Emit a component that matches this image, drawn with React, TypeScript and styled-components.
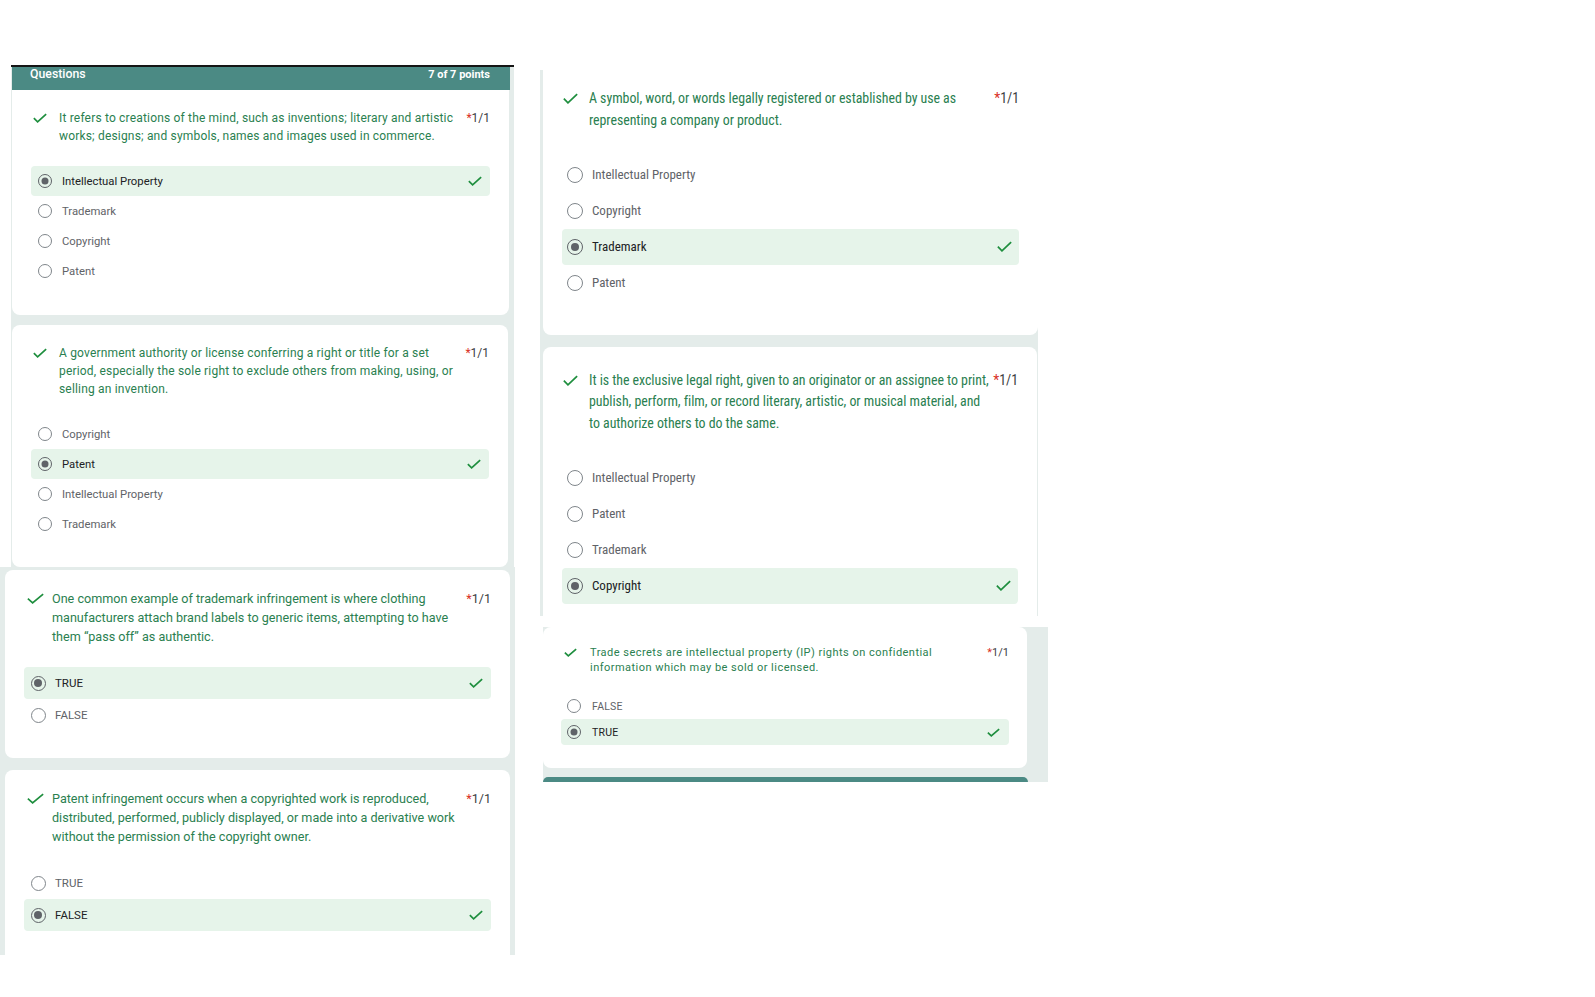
import React from "react";
import styled, { createGlobalStyle } from "styled-components";

const GlobalStyle = createGlobalStyle`
  html, body { margin: 0; padding: 0; background: #ffffff; }
  body { font-family: Roboto, "Noto Sans", Arial, sans-serif; }
  #root { min-height: 997px; }
`;

const ROBOTO = `Roboto, "Noto Sans", Arial, sans-serif`;

const C = {
  teal: "#4b8a84",
  bg: "#e4ecea",
  hl: "#e6f4ea",
  green: "#1e8e3e",
  qText: "#2a8050",
  red: "#d93025",
  dark: "#3c4043",
  label: "#5f6368",
  selLabel: "#202124",
  radio: "#80868b",
};

type Scale = {
  padX: number;
  qIndent: number;
  checkBox: number;
  checkW: number;
  checkH: number;
  qSize: number;
  qLh: number;
  qSpacing: number;
  stretch: string;
  gap: number;
  rowH: number;
  radio: number;
  radioLeft: number;
  labelLeft: number;
  optSize: number;
  optSpacing: number;
  tickW: number;
  tickH: number;
  tickRight: number;
};

const L1: Scale = {
  padX: 19, qIndent: 2, checkBox: 26, checkW: 14, checkH: 10,
  qSize: 12, qLh: 18, qSpacing: 0.18, stretch: "100%",
  gap: 21, rowH: 30, radio: 14, radioLeft: 7, labelLeft: 31, optSize: 11.3, optSpacing: 0,
  tickW: 14, tickH: 10, tickRight: 8,
};
const L3: Scale = {
  padX: 19, qIndent: 3, checkBox: 25, checkW: 17, checkH: 11,
  qSize: 12.6, qLh: 19, qSpacing: 0, stretch: "100%",
  gap: 21.5, rowH: 32, radio: 15, radioLeft: 6.5, labelLeft: 31, optSize: 11.5, optSpacing: 0,
  tickW: 14, tickH: 10, tickRight: 8,
};
const R: Scale = {
  padX: 19, qIndent: 1, checkBox: 26, checkW: 15, checkH: 11,
  qSize: 13.9, qLh: 21.5, qSpacing: -0.04, stretch: "75%",
  gap: 25.5, rowH: 36, radio: 16, radioLeft: 5, labelLeft: 30, optSize: 13, optSpacing: 0,
  tickW: 15, tickH: 11, tickRight: 7,
};
const R3: Scale = {
  padX: 18, qIndent: 3, checkBox: 26, checkW: 13, checkH: 9,
  qSize: 11, qLh: 15.5, qSpacing: 0.47, stretch: "100%",
  gap: 17.5, rowH: 26, radio: 14, radioLeft: 6, labelLeft: 31, optSize: 10.5, optSpacing: 0.2,
  tickW: 13, tickH: 9, tickRight: 9,
};

/* ---------- layout ---------- */

const Page = styled.div`
  display: flex;
  align-items: flex-start;
  padding-top: 65px;
`;

const LeftColumn = styled.div`
  display: flex;
  flex-direction: column;
  width: 515px;
  flex: none;
`;

const RightColumn = styled.div`
  display: flex;
  flex-direction: column;
  width: 508px;
  margin-left: 25px;
  padding-top: 5px;
  flex: none;
`;

const SheetTop = styled.div`
  display: flex;
  flex-direction: column;
  width: 503px;
  margin-left: 11px;
  box-sizing: border-box;
  border-top: 2px solid #151515;
  background: ${C.bg};
  padding: 0 4px 0 1px;
`;

const Sheet = styled.div<{ $h: number; $pad: string; $gap: number; $ml?: number; $mt?: number; $w: number }>`
  display: flex;
  flex-direction: column;
  gap: ${(p) => p.$gap}px;
  width: ${(p) => p.$w}px;
  height: ${(p) => p.$h}px;
  margin-left: ${(p) => p.$ml ?? 0}px;
  margin-top: ${(p) => p.$mt ?? 0}px;
  box-sizing: border-box;
  padding: ${(p) => p.$pad};
  background: ${C.bg};
  overflow: hidden;
  flex: none;
`;

const Header = styled.div`
  display: flex;
  justify-content: space-between;
  align-items: flex-start;
  height: 23px;
  box-sizing: border-box;
  padding: 1px 20px 0 18px;
  background: ${C.teal};
  color: #ffffff;
  font-family: ${ROBOTO};
  line-height: 13px;
`;

const HeaderTitle = styled.span`
  font-size: 12.3px;
  font-weight: 500;
`;

const HeaderScore = styled.span`
  font-size: 11px;
  font-weight: 700;
`;

const TealBar = styled.div`
  height: 5px;
  width: 485px;
  background: ${C.teal};
  border-radius: 8px 8px 0 0;
  flex: none;
`;

/* ---------- card ---------- */

const Card = styled.div<{ $s: Scale; $pt: number; $pb: number; $radius: string; $mr?: number; $mt?: number }>`
  flex: none;
  background: #ffffff;
  border-radius: ${(p) => p.$radius};
  padding: ${(p) => `${p.$pt}px ${p.$s.padX}px ${p.$pb}px`};
  margin-right: ${(p) => p.$mr ?? 0}px;
  margin-top: ${(p) => p.$mt ?? 0}px;
`;

const QuestionRow = styled.div<{ $s: Scale }>`
  display: flex;
  align-items: flex-start;
  margin-left: ${(p) => p.$s.qIndent}px;
  font-family: ${ROBOTO};
  font-size: ${(p) => p.$s.qSize}px;
  line-height: ${(p) => p.$s.qLh}px;
  font-stretch: ${(p) => p.$s.stretch};
`;

const CheckSlot = styled.div<{ $s: Scale }>`
  flex: none;
  width: ${(p) => p.$s.checkBox}px;
  height: ${(p) => p.$s.qLh}px;
  display: flex;
  align-items: center;
`;

const QText = styled.div<{ $s: Scale }>`
  color: ${C.qText};
  letter-spacing: ${(p) => p.$s.qSpacing}px;
`;

const QLine = styled.span`
  display: block;
  white-space: nowrap;
`;

const Points = styled.div`
  margin-left: auto;
  padding-left: 4px;
  flex: none;
  color: ${C.dark};
  white-space: nowrap;
`;

const Star = styled.span`
  color: ${C.red};
`;

const Options = styled.div<{ $s: Scale }>`
  display: flex;
  flex-direction: column;
  margin-top: ${(p) => p.$s.gap}px;
`;

const OptionRow = styled.div<{ $s: Scale; $selected: boolean }>`
  display: flex;
  align-items: center;
  height: ${(p) => p.$s.rowH}px;
  padding-left: ${(p) => p.$s.radioLeft}px;
  border-radius: 4px;
  background: ${(p) => (p.$selected ? C.hl : "transparent")};
  font-family: ${ROBOTO};
  font-stretch: ${(p) => p.$s.stretch};
  font-size: ${(p) => p.$s.optSize}px;
  letter-spacing: ${(p) => p.$s.optSpacing}px;
`;

const Radio = styled.span<{ $s: Scale; $selected: boolean }>`
  flex: none;
  position: relative;
  box-sizing: border-box;
  width: ${(p) => p.$s.radio}px;
  height: ${(p) => p.$s.radio}px;
  border-radius: 50%;
  border: 1.5px solid ${(p) => (p.$selected ? "#5f6368" : C.radio)};
  &::after {
    content: "";
    display: ${(p) => (p.$selected ? "block" : "none")};
    position: absolute;
    left: 50%;
    top: 50%;
    width: ${(p) => Math.round(p.$s.radio * 0.5)}px;
    height: ${(p) => Math.round(p.$s.radio * 0.5)}px;
    transform: translate(-50%, -50%);
    border-radius: 50%;
    background: #5f6368;
  }
`;

const Label = styled.span<{ $s: Scale; $selected: boolean }>`
  margin-left: ${(p) => p.$s.labelLeft - p.$s.radioLeft - p.$s.radio}px;
  color: ${(p) => (p.$selected ? C.selLabel : C.label)};
  white-space: nowrap;
`;

const Tick = styled.span<{ $s: Scale }>`
  margin-left: auto;
  margin-right: ${(p) => p.$s.tickRight}px;
  display: flex;
`;

function CheckIcon({ w, h }: { w: number; h: number }) {
  const sw = 1.7;
  return (
    <svg width={w} height={h} viewBox={`0 0 ${w} ${h}`} fill="none">
      <polyline
        points={`${sw / 2},${h * 0.52} ${w * 0.33},${h - sw / 2 - 0.3} ${w - sw / 2},${sw / 2 + 0.3}`}
        stroke={C.green}
        strokeWidth={sw}
        strokeLinejoin="miter"
      />
    </svg>
  );
}

type Q = {
  lines: string[];
  options: string[];
  answer: number;
};

function QuestionCard({
  s, q, pt, pb, radius, mr, mt,
}: { s: Scale; q: Q; pt: number; pb: number; radius: string; mr?: number; mt?: number }) {
  return (
    <Card $s={s} $pt={pt} $pb={pb} $radius={radius} $mr={mr} $mt={mt}>
      <QuestionRow $s={s}>
        <CheckSlot $s={s}>
          <CheckIcon w={s.checkW} h={s.checkH} />
        </CheckSlot>
        <QText $s={s}>
          {q.lines.map((l) => (
            <QLine key={l}>{l}</QLine>
          ))}
        </QText>
        <Points>
          <Star>*</Star>1/1
        </Points>
      </QuestionRow>
      <Options $s={s}>
        {q.options.map((o, i) => (
          <OptionRow key={o} $s={s} $selected={i === q.answer}>
            <Radio $s={s} $selected={i === q.answer} />
            <Label $s={s} $selected={i === q.answer}>{o}</Label>
            {i === q.answer && (
              <Tick $s={s}>
                <CheckIcon w={s.tickW} h={s.tickH} />
              </Tick>
            )}
          </OptionRow>
        ))}
      </Options>
    </Card>
  );
}

const Q1: Q = {
  lines: [
    "It refers to creations of the mind, such as inventions; literary and artistic",
    "works; designs; and symbols, names and images used in commerce.",
  ],
  options: ["Intellectual Property", "Trademark", "Copyright", "Patent"],
  answer: 0,
};
const Q2: Q = {
  lines: [
    "A government authority or license conferring a right or title for a set",
    "period, especially the sole right to exclude others from making, using, or",
    "selling an invention.",
  ],
  options: ["Copyright", "Patent", "Intellectual Property", "Trademark"],
  answer: 1,
};
const Q3: Q = {
  lines: [
    "One common example of trademark infringement is where clothing",
    "manufacturers attach brand labels to generic items, attempting to have",
    "them “pass off” as authentic.",
  ],
  options: ["TRUE", "FALSE"],
  answer: 0,
};
const Q4: Q = {
  lines: [
    "Patent infringement occurs when a copyrighted work is reproduced,",
    "distributed, performed, publicly displayed, or made into a derivative work",
    "without the permission of the copyright owner.",
  ],
  options: ["TRUE", "FALSE"],
  answer: 1,
};
const Q5: Q = {
  lines: [
    "A symbol, word, or words legally registered or established by use as",
    "representing a company or product.",
  ],
  options: ["Intellectual Property", "Copyright", "Trademark", "Patent"],
  answer: 2,
};
const Q6: Q = {
  lines: [
    "It is the exclusive legal right, given to an originator or an assignee to print,",
    "publish, perform, film, or record literary, artistic, or musical material, and",
    "to authorize others to do the same.",
  ],
  options: ["Intellectual Property", "Patent", "Trademark", "Copyright"],
  answer: 3,
};
const Q7: Q = {
  lines: [
    "Trade secrets are intellectual property (IP) rights on confidential",
    "information which may be sold or licensed.",
  ],
  options: ["FALSE", "TRUE"],
  answer: 1,
};

export default function App() {
  return (
    <>
      <GlobalStyle />
      <Page>
        <LeftColumn>
          <SheetTop>
            <Header>
              <HeaderTitle>Questions</HeaderTitle>
              <HeaderScore>7 of 7 points</HeaderScore>
            </Header>
            <QuestionCard s={L1} q={Q1} pt={19} pb={29} radius="0 0 8px 8px" mr={1} />
            <QuestionCard s={L1} q={Q2} pt={19} pb={28} radius="8px" mr={2} mt={10} />
          </SheetTop>
          <Sheet $w={515} $h={388} $pad="3px 5px 0 5px" $gap={12}>
            <QuestionCard s={L3} q={Q3} pt={18.5} pb={27} radius="8px" />
            <QuestionCard s={L3} q={Q4} pt={18.5} pb={27} radius="8px 8px 0 0" />
          </Sheet>
        </LeftColumn>
        <RightColumn>
          <Sheet $w={498} $h={546} $pad="0 0 0 3px" $gap={12}>
            <QuestionCard s={R} q={Q5} pt={18} pb={34} radius="0 0 8px 8px" />
            <QuestionCard s={R} q={Q6} pt={23} pb={14} radius="8px 8px 0 0" mr={1} />
          </Sheet>
          <Sheet $w={505} $h={155} $pad="0 21px 0 0" $gap={9} $ml={3} $mt={11}>
            <QuestionCard s={R3} q={Q7} pt={17.5} pb={23} radius="8px" />
            <TealBar />
          </Sheet>
        </RightColumn>
      </Page>
    </>
  );
}
